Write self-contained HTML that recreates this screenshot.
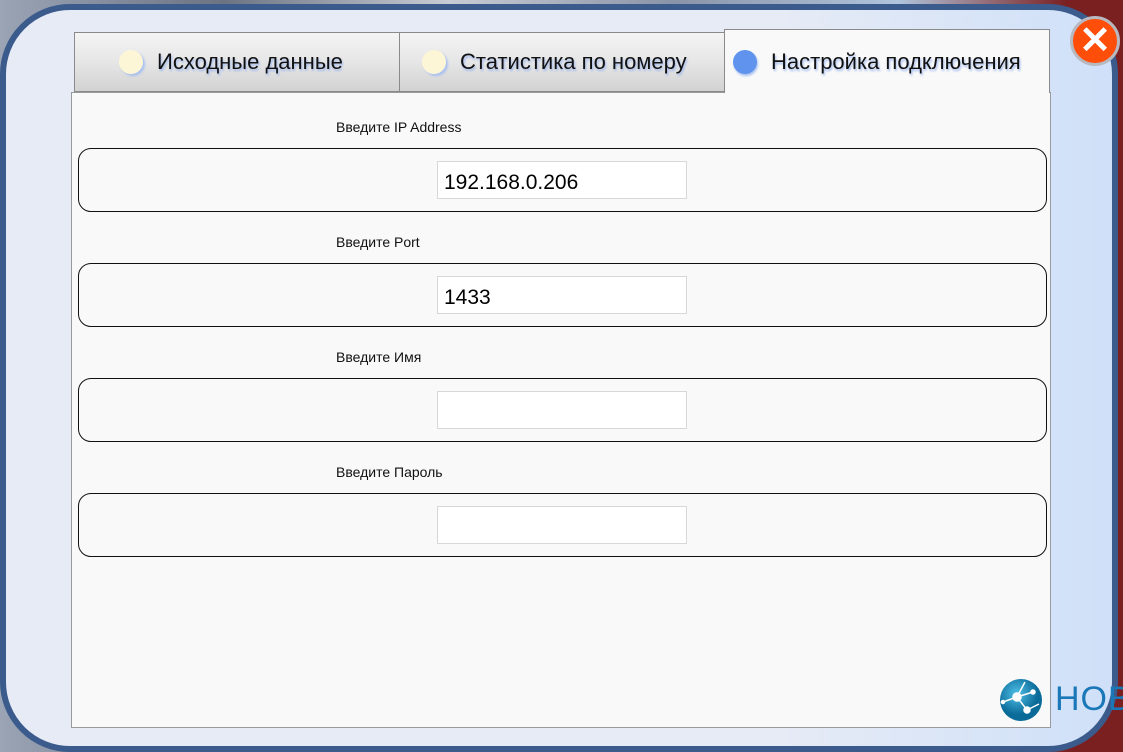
<!DOCTYPE html>
<html><head><meta charset="utf-8"><style>
*{margin:0;padding:0;box-sizing:border-box}
body{width:1123px;height:752px;overflow:hidden;position:relative;background:linear-gradient(90deg,#9aa4b4 0%,#6c7484 20%,#c8ccd4 40%,#8a94a8 60%,#b0c4dc 80%,#7a2020 95%);font-family:"Liberation Sans",sans-serif}
.win{position:absolute;left:0;top:4px;width:1118px;height:748px;border:6px solid #3b5b8c;border-radius:70px;background:linear-gradient(90deg,#e6ebf6 0%,#e6ebf6 70%,#cfe0f8 100%)}
.panel{position:absolute;left:71px;top:92px;width:980px;height:636px;background:#f9f9f9;border:1px solid #9a9a9a}
.tab{position:absolute;top:32px;height:60px;width:326px;border:1px solid #8a8a8a;background:linear-gradient(#f4f4f4 0%,#e6e6e6 50%,#d2d2d2 100%);font-size:22px;color:#111;display:flex;align-items:center;text-shadow:1px 2px 2px #9fb8ee}
.tab .dot{width:24px;height:24px;border-radius:50%;background:#fdf6d6;box-shadow:2px 2px 2px #a9c0f0;margin-right:14px}
.t3{top:29px;height:64px;background:#f9f9f9;border-bottom:none}
.t3 .dot{background:#5f93ee;box-shadow:1px 2px 2px #a9c0f0}
.lbl{position:absolute;left:336px;font-size:14px;color:#111}
.grp{position:absolute;left:78px;width:969px;height:64px;border:1.5px solid #111;border-radius:13px}
.inp{position:absolute;left:437px;width:250px;height:38px;background:#fff;border:1px solid #d8d8d8;font-size:21px;color:#000;padding:9px 0 0 6px}
.close{position:absolute;left:1070px;top:16px;width:50px;height:50px;border-radius:50%;background:#ff4d0a;border:3px solid #b8b8c0;color:#fff;font-size:38px;font-weight:bold;text-align:center;line-height:44px}
</style></head><body>
<div class="win"></div>
<div class="panel"></div>
<div class="tab" style="left:74px;padding-left:44px"><span class="dot"></span>Исходные данные</div>
<div class="tab" style="left:399px;padding-left:22px"><span class="dot"></span>Статистика по номеру</div>
<div class="tab t3" style="left:724px;padding-left:8px"><span class="dot"></span>Настройка подключения</div>
<div class="lbl" style="top:119px">Введите IP Address</div>
<div class="grp" style="top:148px"></div><div class="inp" style="top:161px">192.168.0.206</div>
<div class="lbl" style="top:234px">Введите Port</div>
<div class="grp" style="top:263px"></div><div class="inp" style="top:276px">1433</div>
<div class="lbl" style="top:349px">Введите Имя</div>
<div class="grp" style="top:378px"></div><div class="inp" style="top:391px"></div>
<div class="lbl" style="top:464px">Введите Пароль</div>
<div class="grp" style="top:493px"></div><div class="inp" style="top:506px"></div>
<div class="close">✕</div>
<svg style="position:absolute;left:999px;top:678px" width="44" height="44" viewBox="0 0 44 44"><defs><radialGradient id="g" cx="40%" cy="35%"><stop offset="0" stop-color="#4fc0e8"/><stop offset="1" stop-color="#0a6a98"/></radialGradient></defs><circle cx="22" cy="22" r="21" fill="url(#g)"/><g stroke="#fff" stroke-width="1.5" fill="#fff"><line x1="18" y1="19" x2="34" y2="14"/><line x1="18" y1="19" x2="28" y2="32"/><line x1="18" y1="19" x2="4" y2="24"/><line x1="18" y1="19" x2="26" y2="4"/><line x1="28" y1="32" x2="40" y2="26"/><circle cx="18" cy="19" r="4"/><circle cx="34" cy="14" r="2"/><circle cx="28" cy="32" r="3"/><circle cx="4" cy="24" r="1.5"/></g></svg>
<div style="position:absolute;left:1055px;top:680px;font-size:34px;color:#1a78b8;letter-spacing:1px">НОВ</div>
</body></html>
